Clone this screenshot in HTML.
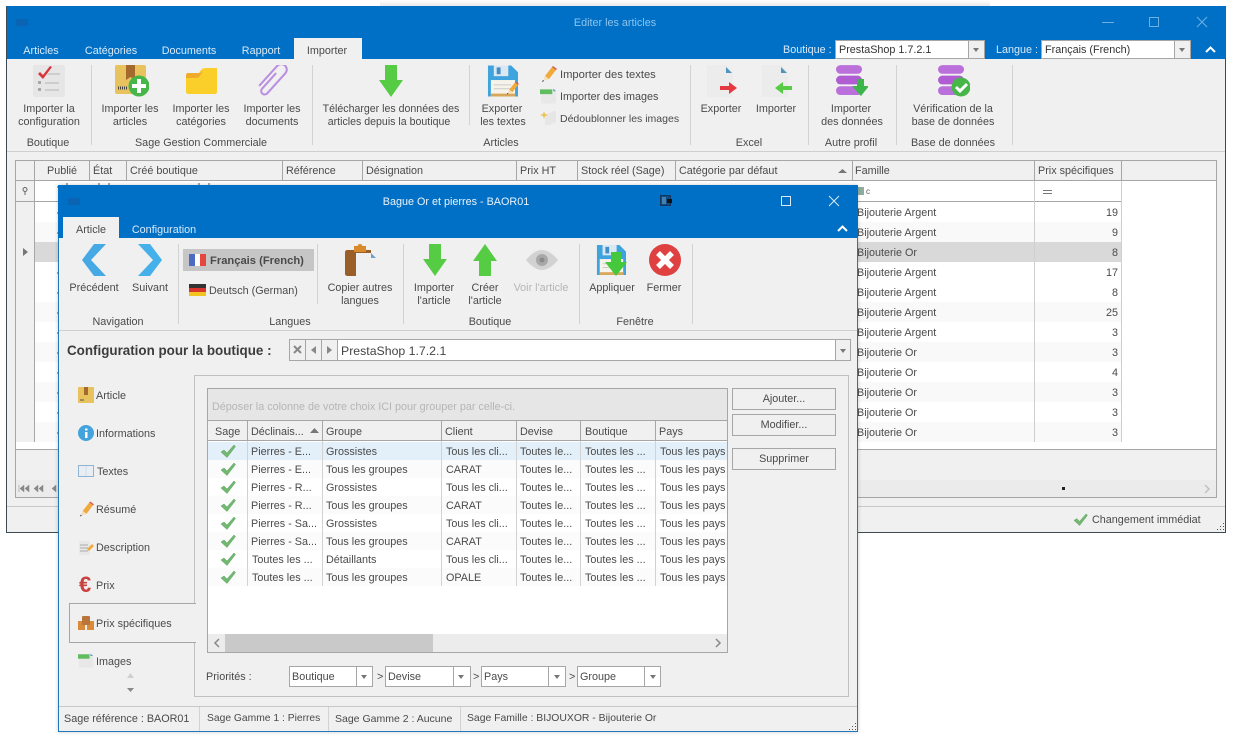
<!DOCTYPE html>
<html lang="fr"><head><meta charset="utf-8"><title>Editer les articles</title>
<style>
html,body{margin:0;padding:0;width:1248px;height:737px;overflow:hidden;background:#fff;font-family:"Liberation Sans",sans-serif;font-size:10.8px;color:#4a4a4a}
div,svg{position:absolute;box-sizing:border-box}
.t{position:absolute;white-space:nowrap;line-height:14px;height:14px;margin-top:2px}
.c{transform:translateX(-50%)}
.w{color:#d8eafa}
.g{background:#d2d2d2;width:1px}
.h{background:#a6a6a6;height:1px}
.v{background:#a6a6a6;width:1px}
.b{background:#fff;border:1px solid #a6a6a6}
.btn{background:#f0f0f0;border:1px solid #a6a6a6;text-align:center;line-height:21px}
.ar{width:0;height:0;border-left:3px solid transparent;border-right:3px solid transparent;border-top:4px solid #777}
</style></head><body>
<svg width="0" height="0" style="position:absolute"><defs>
<symbol id="ck" viewBox="0 0 16 14"><path d="M1 8l3-2 3 3 7-8 1.500 1.500L7 13.500z" fill="#72b872" stroke="#5aa05c" stroke-width=".5"/></symbol>
<symbol id="pen" viewBox="0 0 16 16"><path d="M4 10l7-9 4 3-7 9-4 1z" fill="#f0a93c"/><path d="M11 1l1-1 4 3-1 1z" fill="#cf5650"/><path d="M2 15l2-5 4 3z" fill="#f4dfb8"/><path d="M1 16l1-2 1 1z" fill="#222"/></symbol>
<symbol id="img" viewBox="0 0 18 16"><rect x="1" y="2" width="16" height="14" fill="#e8e8e8"/><rect x="0" y="1" width="13" height="5" fill="#5fbc5f"/><path d="M14 0l3 3h-3z" fill="#5e9ec0"/></symbol>
<symbol id="dbs" viewBox="0 0 28 32"><rect y="0" width="27" height="9" rx="4.500" fill="#bb6fdb"/><rect y="11" width="27" height="9" rx="4.500" fill="#b05dd3"/><rect y="22" width="27" height="9" rx="4.500" fill="#bb6fdb"/></symbol>
<symbol id="flop" viewBox="0 0 32 32"><path d="M1 0h24l7 7v25H1z" fill="#3fa3de"/><rect x="7" y="0" width="15" height="11" fill="#dbe8f2"/><rect x="10" y="2" width="4" height="7" fill="#3f8fc9"/><rect x="4" y="15" width="25" height="17" fill="#f6f4ea"/><rect x="4" y="29" width="25" height="3" fill="#d7a75a"/><path d="M7 20h18M7 24h18" stroke="#c9c9c9"/></symbol>
</defs></svg>

<!-- shadow -->
<div style="left:380px;top:0;width:610px;height:6px;background:linear-gradient(#fff,#e9e9e9)"></div>

<!-- MAIN WINDOW -->
<div style="left:6px;top:6px;width:1220px;height:527px;background:#f0f0f0;border:1px solid #3c4a52;border-top-color:#0070c6"></div>
<div style="left:7px;top:7px;width:1219px;height:52px;background:#0070c6"></div>
<div style="left:16px;top:19px;width:12px;height:7px;background:#0a64b4"></div>
<div class="t c" style="left:615px;top:14px;color:#8cc4ee">Editer les articles</div>
<div style="left:1102px;top:22px;width:12px;height:1px;background:#6fb0e4"></div>
<div style="left:1149px;top:17px;width:10px;height:10px;border:1px solid #6fb0e4"></div>
<svg style="left:1196px;top:16px" width="12" height="12"><path d="M1 1l10 10M11 1L1 11" stroke="#6fb0e4"/></svg>
<div style="left:294px;top:38px;width:68px;height:21px;background:#f0f0f0"></div>
<div class="t c w" style="left:41px;top:42px">Articles</div>
<div class="t c w" style="left:111px;top:42px">Catégories</div>
<div class="t c w" style="left:189px;top:42px">Documents</div>
<div class="t c w" style="left:261px;top:42px">Rapport</div>
<div class="t c" style="left:327px;top:42px">Importer</div>
<div class="t w" style="left:783px;top:41px">Boutique :</div>
<div style="left:835px;top:40px;width:150px;height:19px;background:#fff;border:1px solid #a6a6a6"></div>
<div style="left:968px;top:40px;width:17px;height:19px;background:#f0f0f0;border:1px solid #a6a6a6"></div>
<div class="ar" style="left:973px;top:48px"></div>
<div class="t" style="left:839px;top:41px;color:#333">PrestaShop 1.7.2.1</div>
<div class="t w" style="left:996px;top:41px">Langue :</div>
<div style="left:1041px;top:40px;width:150px;height:19px;background:#fff;border:1px solid #a6a6a6"></div>
<div style="left:1174px;top:40px;width:17px;height:19px;background:#f0f0f0;border:1px solid #a6a6a6"></div>
<div class="ar" style="left:1179px;top:48px"></div>
<div class="t" style="left:1045px;top:41px;color:#333">Français (French)</div>
<svg style="left:1205px;top:46px" width="11" height="7"><path d="M1 6l4.500-4.500L10 6" fill="none" stroke="#fff" stroke-width="2"/></svg>

<!-- main ribbon separators -->
<div class="g" style="left:91px;top:65px;height:80px"></div>
<div class="g" style="left:312px;top:65px;height:80px"></div>
<div class="g" style="left:469px;top:65px;height:60px"></div>
<div class="g" style="left:690px;top:65px;height:80px"></div>
<div class="g" style="left:808px;top:65px;height:80px"></div>
<div class="g" style="left:896px;top:65px;height:80px"></div>
<div class="g" style="left:1012px;top:65px;height:80px"></div>
<div class="h" style="left:7px;top:151px;width:1218px;background:#cfcfcf"></div>

<!-- main ribbon icons -->
<svg style="left:33px;top:65px" width="32" height="32"><rect width="32" height="32" rx="2" fill="#e6e6e6"/><path d="M5 9l2-2 3 3 7-9 2 1-9 12z" fill="#d8363a"/><path d="M14 9h13M12 18h14M12 25h14" stroke="#cdcdcd" stroke-width="2"/><rect x="5" y="16" width="3" height="3" fill="#a8a8a8"/><rect x="5" y="23" width="3" height="3" fill="#a8a8a8"/></svg>
<svg style="left:115px;top:65px" width="34" height="32"><rect width="31" height="29" rx="2" fill="#e8c25c"/><rect x="11" width="9" height="15" fill="#a3692d"/><path d="M11 15l4.500-3 4.500 3z" fill="#e8c25c"/><path d="M3 23h9" stroke="#444" stroke-width="3" stroke-dasharray="1 1"/><circle cx="24" cy="21" r="10.500" fill="#46b649"/><path d="M24 14v14M17 21h14" stroke="#fff" stroke-width="4"/></svg>
<svg style="left:186px;top:68px" width="32" height="26"><path d="M0 24V7h12l2-4C16 1 17 0 19 0h12v24c0 1-1 2-2 2H2c-1 0-2-1-2-2z" fill="#fbcf2a"/><path d="M0 10V7c0-1 1-2 2-2h12l3-2-3 5C13 9 12 10 10 10z" fill="#eeab2a"/></svg>
<svg style="left:258px;top:65px" width="30" height="32"><g transform="translate(15 16) rotate(42)"><path d="M-3-8V13a3.500 3.500 0 0 0 7 0V-14a5.500 5.500 0 0 0-11 0V13" fill="none" stroke="#b98ee0" stroke-width="2"/></g></svg>
<svg style="left:379px;top:65px" width="24" height="32"><path d="M6 0h12v15h6L12 32 0 15h6z" fill="#55cc44"/></svg>
<svg style="left:487px;top:65px" width="32" height="32"><use href="#flop" width="31" height="32"/><use href="#pen" x="19" y="14" width="13" height="18"/></svg>
<svg style="left:541px;top:66px" width="16" height="16"><use href="#pen" width="16" height="16"/></svg>
<svg style="left:540px;top:88px" width="17" height="16"><use href="#img" width="17" height="16"/></svg>
<svg style="left:540px;top:110px" width="17" height="16"><path d="M5 15V5l9-4h2v11l-7 3z" fill="#e6e6e6"/><path d="M4 1l1 3 3 1-3 1-1 3-1-3-3-1 3-1z" fill="#ecc04c"/></svg>
<svg style="left:707px;top:65px" width="32" height="32"><path d="M0 0h20l6 6v26H0z" fill="#ececec"/><path d="M19 2v6h6z" fill="#4f94bf"/><path d="M13 21h9v-4l8 6-8 6v-4h-9z" fill="#e73a40"/></svg>
<svg style="left:762px;top:65px" width="32" height="32"><path d="M0 0h20l6 6v26H0z" fill="#ececec"/><path d="M19 2v6h6z" fill="#4f94bf"/><path d="M30 21h-9v-4l-8 6 8 6v-4h9z" fill="#55cc44"/></svg>
<svg style="left:836px;top:65px" width="32" height="32"><use href="#dbs" width="27" height="31"/><path d="M21 14h7v7h5l-8 10-9-10h5z" fill="#3cb54a"/></svg>
<svg style="left:938px;top:65px" width="32" height="32"><use href="#dbs" width="27" height="31"/><circle cx="23" cy="22" r="9.500" fill="#46b649"/><path d="M18 22l4 4 7-7" fill="none" stroke="#fff" stroke-width="3"/></svg>

<!-- main ribbon text -->
<div class="t c" style="left:49px;top:100px">Importer la</div><div class="t c" style="left:49px;top:113px">configuration</div><div class="t c" style="left:48px;top:134px">Boutique</div>
<div class="t c" style="left:130px;top:100px">Importer les</div><div class="t c" style="left:130px;top:113px">articles</div>
<div class="t c" style="left:201px;top:100px">Importer les</div><div class="t c" style="left:201px;top:113px">catégories</div>
<div class="t c" style="left:272px;top:100px">Importer les</div><div class="t c" style="left:272px;top:113px">documents</div>
<div class="t c" style="left:201px;top:134px">Sage Gestion Commerciale</div>
<div class="t c" style="left:391px;top:100px;font-size:10.600px">Télécharger les données des</div><div class="t c" style="left:389px;top:113px;font-size:10.600px">articles depuis la boutique</div>
<div class="t c" style="left:502px;top:100px">Exporter</div><div class="t c" style="left:503px;top:113px">les textes</div><div class="t c" style="left:501px;top:134px">Articles</div>
<div class="t" style="left:560px;top:66px;font-size:11.200px">Importer des textes</div><div class="t" style="left:560px;top:88px">Importer des images</div><div class="t" style="left:560px;top:110px;font-size:10.500px">Dédoublonner les images</div>
<div class="t c" style="left:721px;top:100px">Exporter</div><div class="t c" style="left:776px;top:100px">Importer</div><div class="t c" style="left:749px;top:134px">Excel</div>
<div class="t c" style="left:851px;top:100px">Importer</div><div class="t c" style="left:852px;top:113px">des données</div><div class="t c" style="left:851px;top:134px">Autre profil</div>
<div class="t c" style="left:953px;top:100px">Vérification de la</div><div class="t c" style="left:953px;top:113px">base de données</div><div class="t c" style="left:953px;top:134px">Base de données</div>

<!-- main grid -->
<div style="left:15px;top:160px;width:1202px;height:338px;background:#fff;border:1px solid #a6a6a6"></div>
<div style="left:16px;top:161px;width:1200px;height:20px;background:#f0f0f0;border-bottom:1px solid #a6a6a6"></div>
<div style="left:16px;top:181px;width:19px;height:261px;background:#f0f0f0"></div>
<div class="v" style="left:34px;top:161px;height:281px"></div>
<div style="left:35px;top:222px;width:1086px;height:20px;background:#f9f9f9"></div>
<div style="left:35px;top:262px;width:1086px;height:20px;background:#fff"></div>
<div style="left:35px;top:302px;width:1086px;height:20px;background:#f9f9f9"></div>
<div style="left:35px;top:342px;width:1086px;height:20px;background:#f9f9f9"></div>
<div style="left:35px;top:382px;width:1086px;height:20px;background:#f9f9f9"></div>
<div style="left:35px;top:422px;width:1086px;height:20px;background:#f9f9f9"></div>
<div style="left:16px;top:242px;width:18px;height:20px;background:#f0f0f0"></div>
<div style="left:35px;top:242px;width:1086px;height:20px;background:#d9d9d9"></div>
<div class="h" style="left:16px;top:201px;width:1105px"></div>
<div class="v" style="left:89px;top:161px;height:20px"></div><div class="v" style="left:126px;top:161px;height:20px"></div><div class="v" style="left:282px;top:161px;height:20px"></div><div class="v" style="left:362px;top:161px;height:20px"></div><div class="v" style="left:516px;top:161px;height:20px"></div><div class="v" style="left:577px;top:161px;height:20px"></div><div class="v" style="left:675px;top:161px;height:20px"></div><div class="v" style="left:852px;top:161px;height:20px"></div><div class="v" style="left:1034px;top:161px;height:20px"></div><div class="v" style="left:1121px;top:161px;height:20px"></div>
<div class="g" style="left:1034px;top:181px;height:261px;background:#cfcfcf"></div><div class="g" style="left:1121px;top:181px;height:261px;background:#cfcfcf"></div>
<div class="t" style="left:47px;top:162px">Publié</div><div class="t" style="left:93px;top:162px">État</div><div class="t" style="left:130px;top:162px">Créé boutique</div><div class="t" style="left:286px;top:162px">Référence</div><div class="t" style="left:366px;top:162px">Désignation</div><div class="t" style="left:520px;top:162px">Prix HT</div><div class="t" style="left:581px;top:162px">Stock réel (Sage)</div><div class="t" style="left:679px;top:162px">Catégorie par défaut</div><div class="t" style="left:855px;top:162px">Famille</div><div class="t" style="left:1038px;top:162px">Prix spécifiques</div>
<svg style="left:838px;top:168px" width="9" height="6"><path d="M0 5l4.500-4L9 5z" fill="#777"/></svg>
<svg style="left:22px;top:187px" width="6" height="8"><circle cx="3" cy="2.500" r="2" fill="none" stroke="#666"/><path d="M3 4v4" stroke="#666"/></svg>
<svg style="left:23px;top:248px" width="5" height="8"><path d="M0 0l5 4-5 4z" fill="#777"/></svg>
<svg style="left:857px;top:187px" width="18" height="8"><rect x="1" width="6" height="8" fill="#8fae9f"/><text x="9" y="7" font-size="8" fill="#555" font-family="Liberation Sans">c</text></svg>
<div style="left:1043px;top:190px;width:9px;height:4px;border-top:1px solid #777;border-bottom:1px solid #777"></div>
<div class="t" style="left:857px;top:204px">Bijouterie Argent</div><div class="t" style="left:857px;top:224px">Bijouterie Argent</div><div class="t" style="left:857px;top:244px">Bijouterie Or</div><div class="t" style="left:857px;top:264px">Bijouterie Argent</div><div class="t" style="left:857px;top:284px">Bijouterie Argent</div><div class="t" style="left:857px;top:304px">Bijouterie Argent</div><div class="t" style="left:857px;top:324px">Bijouterie Argent</div><div class="t" style="left:857px;top:344px">Bijouterie Or</div><div class="t" style="left:857px;top:364px">Bijouterie Or</div><div class="t" style="left:857px;top:384px">Bijouterie Or</div><div class="t" style="left:857px;top:404px">Bijouterie Or</div><div class="t" style="left:857px;top:424px">Bijouterie Or</div>
<div class="t" style="right:130px;top:204px">19</div><div class="t" style="right:130px;top:224px">9</div><div class="t" style="right:130px;top:244px">8</div><div class="t" style="right:130px;top:264px">17</div><div class="t" style="right:130px;top:284px">8</div><div class="t" style="right:130px;top:304px">25</div><div class="t" style="right:130px;top:324px">3</div><div class="t" style="right:130px;top:344px">3</div><div class="t" style="right:130px;top:364px">4</div><div class="t" style="right:130px;top:384px">3</div><div class="t" style="right:130px;top:404px">3</div><div class="t" style="right:130px;top:424px">3</div>
<div style="left:16px;top:449px;width:1200px;height:48px;background:#f0f0f0;border-top:1px solid #a6a6a6"></div>
<div style="left:16px;top:480px;width:1200px;height:17px;background:#ebebeb"></div>
<svg style="left:18px;top:484px" width="40" height="9"><path d="M1 1v7M6 1L2 4.500 6 8zM11 1L7 4.500 11 8zM20 1l-4 3.500L20 8zM25 1l-4 3.500L25 8zM38 1l-4 3.500L38 8z" fill="#888" stroke="#888" stroke-width=".5"/></svg>
<div style="left:1062px;top:487px;width:3px;height:3px;background:#222"></div>
<svg style="left:1204px;top:484px" width="7" height="10"><path d="M1 1l4 4-4 4" fill="none" stroke="#c2c2c2" stroke-width="1.500"/></svg>
<div class="h" style="left:7px;top:506px;width:1218px;background:#c8c8c8"></div>
<svg style="left:1073px;top:513px" width="15" height="13"><use href="#ck" width="15" height="13"/></svg>
<div class="t" style="left:1092px;top:511px">Changement immédiat</div>
<svg style="left:1216px;top:522px" width="9" height="9"><path d="M7 1h1v1H7zM4 4h1v1H4zM7 4h1v1H7zM1 7h1v1H1zM4 7h1v1H4zM7 7h1v1H7z" fill="#555"/></svg>

<!-- faint checkbox remains -->
<svg style="left:54px;top:182px" width="5" height="260"><path d="M3 4h2v2H3zM3 30h2v2H3zM3 50h2v2H3zM3 90h2v2H3zM3 110h2v2H3zM3 130h2v2H3zM3 150h2v2H3zM3 170h2v2H3zM3 190h2v2H3zM3 210h2v2H3zM3 230h2v2H3zM3 250h2v2H3z" fill="#a8a8a8"/></svg>
<svg style="left:60px;top:183px" width="160" height="2"><path d="M6 0h2v2H6zM38 0h2v2h-2zM48 0h2v2h-2zM138 0h2v2h-2zM148 0h2v2h-2z" fill="#a8a8a8"/></svg>

<!-- DIALOG -->
<div style="left:58px;top:185px;width:800px;height:547px;background:#f0f0f0;border:1px solid #1f78b8;border-top:0;box-shadow:0 0 4px rgba(0,0,0,.2)"></div>
<div style="left:58px;top:185px;width:800px;height:53px;background:#0070c6"></div>
<div style="left:68px;top:198px;width:12px;height:7px;background:#0a64b4"></div>
<div class="t c" style="left:456px;top:193px;color:#e9f3fb">Bague Or et pierres - BAOR01</div>
<svg style="left:660px;top:195px" width="12" height="11"><rect x=".5" y=".5" width="10" height="10" fill="#0a4f8a" stroke="#14365c"/><path d="M3 2v7M5 2v7" stroke="#7fb0d8"/><rect x="7" y="4" width="5" height="4" fill="#111"/></svg>
<div style="left:781px;top:196px;width:10px;height:10px;border:1px solid #d8eafa"></div>
<svg style="left:828px;top:195px" width="12" height="12"><path d="M1 1l10 10M11 1L1 11" stroke="#d8eafa"/></svg>
<div style="left:63px;top:217px;width:56px;height:21px;background:#f0f0f0"></div>
<div class="t c" style="left:91px;top:221px">Article</div>
<div class="t c w" style="left:164px;top:221px">Configuration</div>
<svg style="left:837px;top:225px" width="11" height="7"><path d="M1 6l4.500-4.500L10 6" fill="none" stroke="#fff" stroke-width="2"/></svg>

<!-- dialog ribbon -->
<div class="g" style="left:178px;top:244px;height:80px"></div>
<div class="g" style="left:317px;top:244px;height:60px"></div>
<div class="g" style="left:403px;top:244px;height:80px"></div>
<div class="g" style="left:579px;top:244px;height:80px"></div>
<div class="g" style="left:692px;top:244px;height:80px"></div>
<div class="h" style="left:59px;top:330px;width:798px;background:#cfcfcf"></div>
<svg style="left:82px;top:244px" width="24" height="32"><path d="M12 0h12L9 16l15 16H12L0 16z" fill="#46a9e4"/></svg>
<svg style="left:138px;top:244px" width="24" height="32"><path d="M12 0H0l15 16L0 32h12l12-16z" fill="#46b0ea"/></svg>
<div style="left:183px;top:249px;width:131px;height:22px;background:#c6c6c6"></div>
<svg style="left:189px;top:254px" width="17" height="12"><rect width="17" height="12" fill="#fff"/><rect width="6" height="12" fill="#4b6cc1"/><rect x="11" width="6" height="12" fill="#e4473f"/></svg>
<div class="t" style="left:210px;top:252px;font-weight:700;font-size:11.200px;color:#4a4a4a">Français (French)</div>
<svg style="left:189px;top:284px" width="17" height="12"><rect width="17" height="4" fill="#333"/><rect y="4" width="17" height="4" fill="#d9352c"/><rect y="8" width="17" height="4" fill="#f2c41f"/></svg>
<div class="t" style="left:209px;top:282px">Deutsch (German)</div>
<svg style="left:345px;top:244px" width="32" height="33"><path d="M2 6h24v26H3c-2 0-3-1-3-2V8c0-1 1-2 2-2z" fill="#9a5f28"/><rect x="9" y="2" width="12" height="6" fill="#d98b2b"/><circle cx="15" cy="2.500" r="2.500" fill="#d98b2b"/><path d="M11 9h15l5 5v18H11z" fill="#f0f0f0"/><path d="M26 9l5 5h-5z" fill="#6ba2cf"/></svg>
<svg style="left:423px;top:244px" width="24" height="32"><path d="M6 0h12v15h6L12 32 0 15h6z" fill="#55cc44"/></svg>
<svg style="left:473px;top:244px" width="24" height="32"><path d="M6 32h12V17h6L12 0 0 17h6z" fill="#55cc44"/></svg>
<svg style="left:526px;top:250px" width="32" height="20"><path d="M0 10C6 3 11 0 16 0s10 3 16 10c-6 7-11 10-16 10S6 17 0 10z" fill="#d2d2d2"/><circle cx="16" cy="10" r="6" fill="#a8a8a8"/><circle cx="16" cy="10" r="2.500" fill="#8a8a8a"/></svg>
<svg style="left:596px;top:244px" width="32" height="32"><use href="#flop" width="30" height="32"/><path d="M12 8h10v10h6L17 32 6 18h6z" transform="translate(3 0)" fill="#46c83c"/></svg>
<svg style="left:649px;top:244px" width="32" height="32"><circle cx="16" cy="16" r="16" fill="#df4040"/><path d="M9 9l14 14M23 9L9 23" stroke="#fff" stroke-width="5.500"/></svg>
<div class="t c" style="left:94px;top:279px">Précédent</div><div class="t c" style="left:150px;top:279px">Suivant</div><div class="t c" style="left:118px;top:313px">Navigation</div>
<div class="t c" style="left:360px;top:279px">Copier autres</div><div class="t c" style="left:360px;top:292px">langues</div><div class="t c" style="left:290px;top:313px">Langues</div>
<div class="t c" style="left:434px;top:279px">Importer</div><div class="t c" style="left:434px;top:292px">l'article</div>
<div class="t c" style="left:485px;top:279px">Créer</div><div class="t c" style="left:485px;top:292px">l'article</div>
<div class="t c" style="left:541px;top:279px;color:#b5b5b5">Voir l'article</div><div class="t c" style="left:490px;top:313px">Boutique</div>
<div class="t c" style="left:612px;top:279px">Appliquer</div><div class="t c" style="left:664px;top:279px">Fermer</div><div class="t c" style="left:635px;top:313px">Fenêtre</div>

<!-- config row -->
<div class="t" style="left:67px;top:342px;font-weight:700;font-size:13.400px;color:#3c3c3c">Configuration pour la boutique :</div>
<div style="left:289px;top:339px;width:562px;height:22px;background:#fff;border:1px solid #a6a6a6"></div>
<div style="left:290px;top:340px;width:47px;height:20px;background:#f0f0f0"></div>
<div class="v" style="left:305px;top:340px;height:20px"></div><div class="v" style="left:321px;top:340px;height:20px"></div><div class="v" style="left:337px;top:340px;height:20px"></div>
<svg style="left:293px;top:345px" width="9" height="9"><path d="M1 1l7 7M8 1L1 8" stroke="#888" stroke-width="2"/></svg>
<svg style="left:311px;top:346px" width="5" height="8"><path d="M5 0L0 4l5 4z" fill="#888"/></svg>
<svg style="left:327px;top:346px" width="5" height="8"><path d="M0 0l5 4-5 4z" fill="#888"/></svg>
<div class="t" style="left:341px;top:342px;font-size:12.300px;color:#444">PrestaShop 1.7.2.1</div>
<div style="left:835px;top:339px;width:16px;height:22px;background:#f0f0f0;border:1px solid #a6a6a6"></div>
<div class="ar" style="left:840px;top:349px"></div>

<!-- side tabs panel -->
<div style="left:194px;top:375px;width:655px;height:322px;background:#f0f0f0;border:1px solid #c0c0c0"></div>
<div style="left:69px;top:603px;width:127px;height:40px;background:#f0f0f0;border:1px solid #a6a6a6;border-right:0"></div>
<svg style="left:78px;top:387px" width="16" height="16"><rect width="16" height="16" rx="1" fill="#e8c25c"/><rect x="6" width="4" height="8" fill="#a3692d"/><path d="M2 13h4" stroke="#555"/></svg>
<svg style="left:78px;top:425px" width="16" height="16"><circle cx="8" cy="8" r="8" fill="#44a3dd"/><rect x="7" y="7" width="2.500" height="6" fill="#fff"/><rect x="7" y="3.500" width="2.500" height="2" fill="#fff"/></svg>
<svg style="left:78px;top:465px" width="16" height="12"><rect x=".5" y=".5" width="15" height="11" fill="#e8eef4" stroke="#8fb3d2"/><path d="M8 1v10" stroke="#d4dde6"/></svg>
<svg style="left:79px;top:501px" width="15" height="16"><use href="#pen" width="15" height="16"/></svg>
<svg style="left:78px;top:539px" width="16" height="16"><rect x="1" y="2" width="11" height="14" fill="#e8e8e8"/><path d="M2 6h8M2 9h8M2 12h8" stroke="#aaa"/><path d="M9 10l5-5 2 2-5 5z" fill="#f0a93c"/></svg>
<div class="t" style="left:79px;top:572px;font-size:22px;line-height:26px;height:26px;font-weight:700;color:#c9403d;margin-top:0">€</div>
<svg style="left:78px;top:616px" width="16" height="14"><rect y="5" width="7" height="9" fill="#d98b3a"/><rect x="9" y="5" width="7" height="9" fill="#d98b3a"/><rect x="4" y="0" width="8" height="9" rx="1" fill="#b9763b"/></svg>
<svg style="left:78px;top:653px" width="16" height="15"><use href="#img" width="16" height="15"/></svg>
<div class="t" style="left:96px;top:387px">Article</div><div class="t" style="left:96px;top:425px">Informations</div><div class="t" style="left:97px;top:463px">Textes</div><div class="t" style="left:96px;top:501px">Résumé</div><div class="t" style="left:96px;top:539px">Description</div><div class="t" style="left:96px;top:577px">Prix</div><div class="t" style="left:96px;top:615px">Prix spécifiques</div><div class="t" style="left:96px;top:653px">Images</div>
<svg style="left:127px;top:673px" width="7" height="5"><path d="M0 5l3.500-5L7 5z" fill="#d0d0d0"/></svg>
<svg style="left:127px;top:688px" width="7" height="4"><path d="M0 0l3.500 4L7 0z" fill="#888"/></svg>

<!-- specific prices grid -->
<div style="left:207px;top:388px;width:521px;height:265px;background:#fff;border:1px solid #a6a6a6"></div>
<div style="left:208px;top:389px;width:519px;height:32px;background:#e6e6e6;border-bottom:1px solid #a6a6a6"></div>
<div class="t" style="left:212px;top:398px;color:#b5b5b5">Déposer la colonne de votre choix ICI pour grouper par celle-ci.</div>
<div style="left:208px;top:421px;width:519px;height:20px;background:#f0f0f0;border-bottom:1px solid #a6a6a6"></div>
<div style="left:208px;top:442px;width:519px;height:18px;background:#e3f0fa"></div>
<div style="left:208px;top:460px;width:519px;height:18px;background:#fbfbfb"></div>
<div style="left:208px;top:496px;width:519px;height:18px;background:#fbfbfb"></div>
<div style="left:208px;top:532px;width:519px;height:18px;background:#fbfbfb"></div>
<div style="left:208px;top:568px;width:519px;height:18px;background:#fbfbfb"></div>
<div class="v" style="left:247px;top:421px;height:20px"></div><div class="v" style="left:322px;top:421px;height:20px"></div><div class="v" style="left:441px;top:421px;height:20px"></div><div class="v" style="left:516px;top:421px;height:20px"></div><div class="v" style="left:580px;top:421px;height:20px"></div><div class="v" style="left:655px;top:421px;height:20px"></div>
<div class="g" style="left:247px;top:441px;height:145px"></div><div class="g" style="left:322px;top:441px;height:145px"></div><div class="g" style="left:441px;top:441px;height:145px"></div><div class="g" style="left:516px;top:441px;height:145px"></div><div class="g" style="left:580px;top:441px;height:145px"></div><div class="g" style="left:655px;top:441px;height:145px"></div>
<div class="t" style="left:215px;top:423px">Sage</div><div class="t" style="left:251px;top:423px">Déclinais...</div><div class="t" style="left:326px;top:423px">Groupe</div><div class="t" style="left:445px;top:423px">Client</div><div class="t" style="left:520px;top:423px">Devise</div><div class="t" style="left:585px;top:423px">Boutique</div><div class="t" style="left:659px;top:423px">Pays</div>
<svg style="left:310px;top:428px" width="9" height="5"><path d="M0 5l4.500-5L9 5z" fill="#777"/></svg>
<svg style="left:220px;top:444px" width="16" height="142"><use href="#ck" y="0" width="16" height="14"/><use href="#ck" y="18" width="16" height="14"/><use href="#ck" y="36" width="16" height="14"/><use href="#ck" y="54" width="16" height="14"/><use href="#ck" y="72" width="16" height="14"/><use href="#ck" y="90" width="16" height="14"/><use href="#ck" y="108" width="16" height="14"/><use href="#ck" y="126" width="16" height="14"/></svg>
<div class="t" style="left:251px;top:443px">Pierres - E...</div><div class="t" style="left:326px;top:443px">Grossistes</div><div class="t" style="left:446px;top:443px">Tous les cli...</div><div class="t" style="left:520px;top:443px">Toutes le...</div><div class="t" style="left:585px;top:443px">Toutes les ...</div><div class="t" style="left:660px;top:443px">Tous les pays</div>
<div class="t" style="left:251px;top:461px">Pierres - E...</div><div class="t" style="left:326px;top:461px">Tous les groupes</div><div class="t" style="left:446px;top:461px">CARAT</div><div class="t" style="left:520px;top:461px">Toutes le...</div><div class="t" style="left:585px;top:461px">Toutes les ...</div><div class="t" style="left:660px;top:461px">Tous les pays</div>
<div class="t" style="left:251px;top:479px">Pierres - R...</div><div class="t" style="left:326px;top:479px">Grossistes</div><div class="t" style="left:446px;top:479px">Tous les cli...</div><div class="t" style="left:520px;top:479px">Toutes le...</div><div class="t" style="left:585px;top:479px">Toutes les ...</div><div class="t" style="left:660px;top:479px">Tous les pays</div>
<div class="t" style="left:251px;top:497px">Pierres - R...</div><div class="t" style="left:326px;top:497px">Tous les groupes</div><div class="t" style="left:446px;top:497px">CARAT</div><div class="t" style="left:520px;top:497px">Toutes le...</div><div class="t" style="left:585px;top:497px">Toutes les ...</div><div class="t" style="left:660px;top:497px">Tous les pays</div>
<div class="t" style="left:251px;top:515px">Pierres - Sa...</div><div class="t" style="left:326px;top:515px">Grossistes</div><div class="t" style="left:446px;top:515px">Tous les cli...</div><div class="t" style="left:520px;top:515px">Toutes le...</div><div class="t" style="left:585px;top:515px">Toutes les ...</div><div class="t" style="left:660px;top:515px">Tous les pays</div>
<div class="t" style="left:251px;top:533px">Pierres - Sa...</div><div class="t" style="left:326px;top:533px">Tous les groupes</div><div class="t" style="left:446px;top:533px">CARAT</div><div class="t" style="left:520px;top:533px">Toutes le...</div><div class="t" style="left:585px;top:533px">Toutes les ...</div><div class="t" style="left:660px;top:533px">Tous les pays</div>
<div class="t" style="left:252px;top:551px">Toutes les ...</div><div class="t" style="left:326px;top:551px">Détaillants</div><div class="t" style="left:446px;top:551px">Tous les cli...</div><div class="t" style="left:520px;top:551px">Toutes le...</div><div class="t" style="left:585px;top:551px">Toutes les ...</div><div class="t" style="left:660px;top:551px">Tous les pays</div>
<div class="t" style="left:252px;top:569px">Toutes les ...</div><div class="t" style="left:326px;top:569px">Tous les groupes</div><div class="t" style="left:446px;top:569px">OPALE</div><div class="t" style="left:520px;top:569px">Toutes le...</div><div class="t" style="left:585px;top:569px">Toutes les ...</div><div class="t" style="left:660px;top:569px">Tous les pays</div>
<div style="left:208px;top:634px;width:519px;height:18px;background:#ececec"></div>
<div style="left:225px;top:634px;width:208px;height:18px;background:#c9c9c9"></div>
<svg style="left:213px;top:638px" width="7" height="10"><path d="M6 1L2 5l4 4" fill="none" stroke="#888" stroke-width="1.500"/></svg>
<svg style="left:715px;top:638px" width="7" height="10"><path d="M1 1l4 4-4 4" fill="none" stroke="#888" stroke-width="1.500"/></svg>

<div class="btn" style="left:732px;top:388px;width:104px;height:22px">Ajouter...</div>
<div class="btn" style="left:732px;top:414px;width:104px;height:22px">Modifier...</div>
<div class="btn" style="left:732px;top:448px;width:104px;height:22px">Supprimer</div>

<!-- priorities -->
<div class="t" style="left:206px;top:668px">Priorités :</div>
<div class="b" style="left:289px;top:666px;width:84px;height:21px"></div><div class="v" style="left:356px;top:666px;height:21px"></div><div class="ar" style="left:361px;top:675px"></div><div class="t" style="left:292px;top:668px">Boutique</div><div class="t" style="left:377px;top:668px">&gt;</div>
<div class="b" style="left:385px;top:666px;width:86px;height:21px"></div><div class="v" style="left:453px;top:666px;height:21px"></div><div class="ar" style="left:458px;top:675px"></div><div class="t" style="left:388px;top:668px">Devise</div><div class="t" style="left:473px;top:668px">&gt;</div>
<div class="b" style="left:481px;top:666px;width:85px;height:21px"></div><div class="v" style="left:548px;top:666px;height:21px"></div><div class="ar" style="left:554px;top:675px"></div><div class="t" style="left:484px;top:668px">Pays</div><div class="t" style="left:569px;top:668px">&gt;</div>
<div class="b" style="left:577px;top:666px;width:84px;height:21px"></div><div class="v" style="left:644px;top:666px;height:21px"></div><div class="ar" style="left:650px;top:675px"></div><div class="t" style="left:580px;top:668px">Groupe</div>

<!-- dialog status -->
<div class="h" style="left:59px;top:706px;width:798px;background:#c8c8c8"></div>
<div class="g" style="left:199px;top:707px;height:24px"></div><div class="g" style="left:328px;top:707px;height:24px"></div><div class="g" style="left:460px;top:707px;height:24px"></div>
<div class="t" style="left:64px;top:710px">Sage référence : BAOR01</div><div class="t" style="left:207px;top:710px;font-size:10.300px">Sage Gamme 1 : Pierres</div><div class="t" style="left:335px;top:710px;font-size:10.500px">Sage Gamme 2 : Aucune</div><div class="t" style="left:467px;top:710px;font-size:10.400px">Sage Famille : BIJOUXOR - Bijouterie Or</div>
<svg style="left:848px;top:722px" width="9" height="9"><path d="M7 1h1v1H7zM4 4h1v1H4zM7 4h1v1H7zM1 7h1v1H1zM4 7h1v1H4zM7 7h1v1H7z" fill="#555"/></svg>
</body></html>
